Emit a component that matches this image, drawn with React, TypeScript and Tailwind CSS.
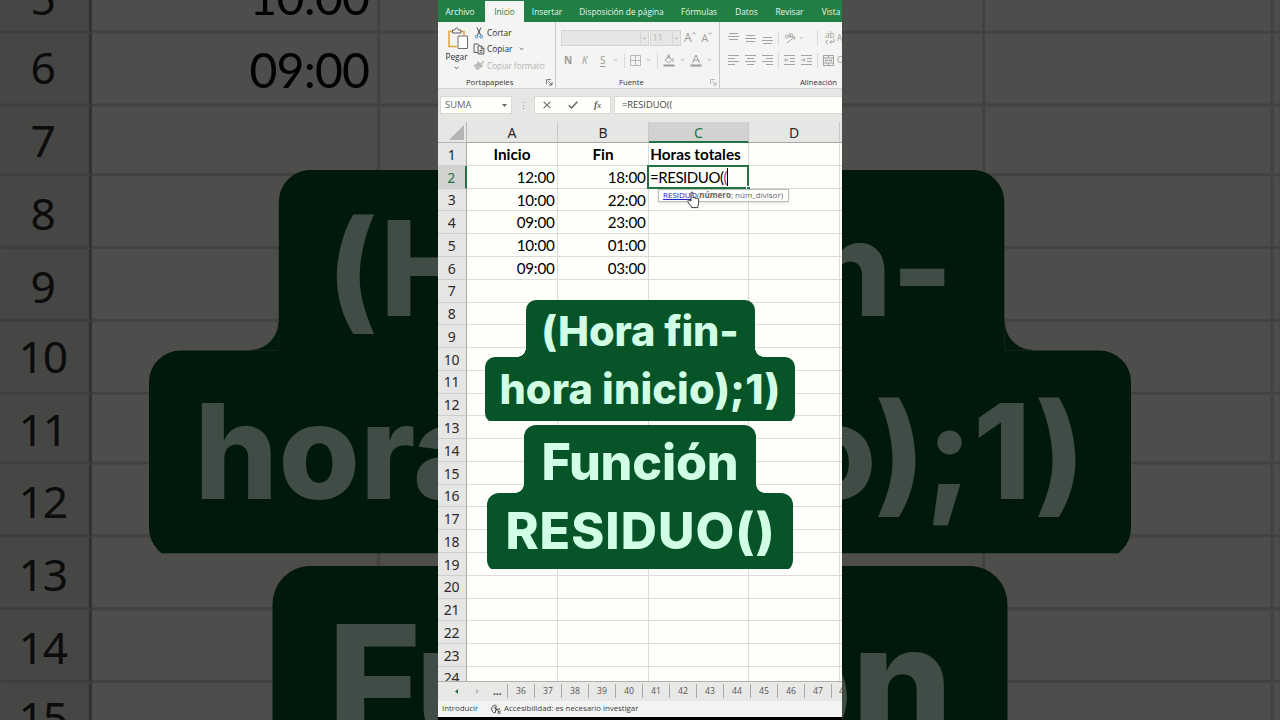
import type { ReactNode } from "react";

const tabs = [
  { name: "Archivo", width: "w-[47px] pr-[3px]" },
  { name: "Inicio", width: "w-[39px]", active: true },
  { name: "Insertar", width: "w-[46px]" },
  { name: "Disposición de página", width: "w-[103px]" },
  { name: "Fórmulas", width: "w-[52px]" },
  { name: "Datos", width: "w-[43px]" },
  { name: "Revisar", width: "w-[43px]" },
  { name: "Vista", width: "w-[40px]" },
];

const columns = [
  { name: "A", width: "w-[91px]" },
  { name: "B", width: "w-[91px]" },
  { name: "C", width: "w-[100px]" },
  { name: "D", width: "w-[91px]" },
  { name: "", width: "w-[10px]" },
];

const cells: Record<number, string[]> = {
  1: ["Inicio", "Fin", "Horas totales"],
  2: ["12:00", "18:00"],
  3: ["10:00", "22:00"],
  4: ["09:00", "23:00"],
  5: ["10:00", "01:00"],
  6: ["09:00", "03:00"],
};

const sheetTabs = [36, 37, 38, 39, 40, 41, 42, 43, 44, 45, 46, 47];

const range = (from: number, to: number) =>
  Array.from({ length: to - from + 1 }, (_, i) => from + i);

function Chevron({ className = "" }: { className?: string }) {
  return (
    <svg className={`w-[5px] h-[4px] shrink-0 ${className}`} viewBox="0 0 5 4" fill="none" stroke="currentColor" strokeWidth="0.9">
      <path d="M0.7 0.8 2.5 2.8 4.3 0.8" />
    </svg>
  );
}

function Triangle({ className = "" }: { className?: string }) {
  return (
    <svg className={`w-[5px] h-[3px] shrink-0 ${className}`} viewBox="0 0 5 3" fill="currentColor">
      <path d="M0 0h5L2.5 3z" />
    </svg>
  );
}

function Launcher({ className = "" }: { className?: string }) {
  return (
    <svg className={`w-[7px] h-[7px] ${className}`} viewBox="0 0 7 7" fill="none" stroke="currentColor" strokeWidth="0.8">
      <path d="M0.6 5V0.6H5M2.4 2.4 6 6M6 3v3H3" />
    </svg>
  );
}

function Lines({ rows, className = "" }: { rows: number[][]; className?: string }) {
  return (
    <svg className={`w-[11px] h-[12px] shrink-0 ${className}`} viewBox="0 0 11 12" stroke="currentColor" strokeWidth="0.9">
      {rows.map(([x1, x2, y]) => (
        <path key={y} d={`M${x1} ${y}H${x2}`} />
      ))}
    </svg>
  );
}

function Separator({ className = "" }: { className?: string }) {
  return <div className={`w-px h-[15px] bg-[#dadad8] shrink-0 ${className}`} />;
}

function Clipboard() {
  return (
    <div className="relative w-[118px] h-[66px] border-r border-[#c8c8c6] shrink-0">
      <div className="flex pt-[3px]">
        <div className="w-[37px] flex flex-col items-center pt-[2px]">
          <svg className="w-[22px] h-[23px] ml-[3px]" viewBox="0 0 22 23" fill="none">
            <path d="M5 4.5H2v15h8M14 4.5h3v4" stroke="#e3a33c" strokeWidth="1.5" />
            <path d="M5.5 6V3h2.3c.2-2.7 3.5-2.7 3.7 0h2.3v3z" fill="#f4f4f2" stroke="#5a5a5a" />
            <path d="M11 9h9.5v12.5H11z" fill="#fdfdfb" stroke="#6e6e6e" />
          </svg>
          <span className="text-[8.3px] leading-[13px] text-[#2e2e2e]">Pegar</span>
          <Chevron className="mt-[3px] text-[#555]" />
        </div>
        <div className="flex flex-col text-[8.3px] leading-[16.3px] text-[#2e2e2e]">
          <div className="flex items-center h-[16.3px]">
            <svg className="w-[8px] h-[12px] mr-[4px]" viewBox="0 0 8 12" fill="none">
              <path d="M2 .5 5.5 8M6 .5 2.5 8" stroke="#4c4c4c" strokeWidth="1" />
              <circle cx="1.7" cy="9.6" r="1.3" stroke="#2f82bd" />
              <circle cx="6.3" cy="9.6" r="1.3" stroke="#2f82bd" />
            </svg>
            Cortar
          </div>
          <div className="flex items-center h-[16.3px]">
            <svg className="w-[12px] h-[12px] -ml-[2px] mr-[2px]" viewBox="0 0 11 12" fill="none" stroke="#4c4c4c" strokeWidth="0.9">
              <path d="M4 9.5H.6V1h4L6 2.5" />
              <path d="M4.5 3H8l2.4 2.4V11H4.5zM7.8 3v2.7h2.6M6 7.5h3M6 9.2h3" />
            </svg>
            Copiar
            <Chevron className="ml-[7px] text-[#666]" />
          </div>
          <div className="flex items-center h-[16.3px] text-[#b4b4b2] tracking-[-0.1px]">
            <svg className="w-[12px] h-[11px] -ml-[2px] mr-[2px]" viewBox="0 0 12 11" fill="none" stroke="currentColor">
              <path d="M11 1 8 4M5.5 2.5 9 6 8 7 4.5 3.5z" strokeWidth="1.3" />
              <path d="M4.5 4 1 5.5 4.5 10 7.5 7z" fill="#c4c4c2" />
            </svg>
            Copiar formato
          </div>
        </div>
      </div>
      <span className="absolute left-[28px] top-[54px] text-[7.7px] leading-[12px] text-[#333]">Portapapeles</span>
      <Launcher className="absolute right-[2px] top-[57px] text-[#555]" />
    </div>
  );
}

function FontGroup() {
  return (
    <div className="relative w-[164px] h-[66px] border-r border-[#c8c8c6] shrink-0 text-[#9b9b99]">
      <div className="flex pt-[8px] pl-[5px] items-center">
        <div className="w-[88px] h-[16px] bg-[#e6e6e5] border border-[#d4d4d2] flex justify-end">
          <div className="w-[8px] border-l border-[#d4d4d2] flex items-center justify-center">
            <Triangle className="text-[#b8b8b6] scale-75" />
          </div>
        </div>
        <div className="w-[31px] h-[16px] ml-px bg-[#e6e6e5] border border-[#d4d4d2] flex items-center text-[8.3px] text-[#b4b4b2]">
          <span className="pl-[2px] grow">11</span>
          <div className="w-[8px] h-full border-l border-[#d4d4d2] flex items-center justify-center">
            <Triangle className="text-[#b8b8b6] scale-75" />
          </div>
        </div>
        <div className="flex items-start ml-[3px] text-[12px] leading-[14px]">
          A
          <svg className="w-[4px] h-[3px] mt-[1px]" viewBox="0 0 4 3" fill="none" stroke="currentColor" strokeWidth="0.8">
            <path d="m.5 2.5 1.5-2 1.5 2" />
          </svg>
        </div>
        <div className="flex items-start ml-[6px] text-[10.5px] leading-[15px]">
          A
          <svg className="w-[4px] h-[3px] mt-[1px]" viewBox="0 0 4 3" fill="none" stroke="currentColor" strokeWidth="0.8">
            <path d="m.5 .5 1.5 2 1.5-2" />
          </svg>
        </div>
      </div>
      <div className="flex items-center h-[14px] mt-[7px] pl-[8px] text-[10px] leading-[14px]">
        <span className="w-[9px] font-bold">N</span>
        <span className="w-[8px] ml-[9px] italic">K</span>
        <span className="w-[7px] ml-[10px] underline underline-offset-2">S</span>
        <Chevron className="ml-[6px] text-[#b4b4b2]" />
        <Separator className="ml-[6px]" />
        <svg className="w-[11px] h-[11px] ml-[5px]" viewBox="0 0 11 11" fill="none" stroke="#b0b0ae" strokeWidth="0.9">
          <path d="M.5 .5h10v10H.5zM5.5 .5v10M.5 5.5h10" />
        </svg>
        <Chevron className="ml-[5px] text-[#b4b4b2]" />
        <Separator className="ml-[6px]" />
        <svg className="w-[12px] h-[13px] ml-[5px]" viewBox="0 0 12 13" fill="none" stroke="currentColor" strokeWidth="0.9">
          <path d="M5 2.5 9 5.5 5.5 9 2 6zM5 5V1.5c0-1 1.5-1 1.5 0v2M9 4c1 1 1.5 2.5 1 4" />
          <path d="M.5 11.5h11" strokeWidth="2" />
        </svg>
        <Chevron className="ml-[5px] text-[#b4b4b2]" />
        <svg className="w-[12px] h-[13px] ml-[5px]" viewBox="0 0 12 13" fill="none" stroke="currentColor">
          <path d="m2.5 9 3.5-8 3.5 8M3.8 6.2h4.4" />
          <path d="M.5 11.5h11" strokeWidth="2" />
        </svg>
        <Chevron className="ml-[5px] text-[#b4b4b2]" />
      </div>
      <span className="absolute left-[63px] top-[54px] text-[7.7px] leading-[12px] text-[#333]">Fuente</span>
      <Launcher className="absolute right-[2px] top-[57px] text-[#a8a8a6]" />
    </div>
  );
}

function Alignment() {
  return (
    <div className="relative w-[150px] h-[66px] shrink-0 text-[#9b9b99]">
      <div className="flex items-center pt-[8px] pl-[8px] h-[24px]">
        <Lines rows={[[1, 10, 1.5], [0, 11, 4.5], [1, 10, 7.5]]} />
        <Lines rows={[[1, 10, 3.5], [0, 11, 6.5], [1, 10, 9.5]]} className="ml-[6px]" />
        <Lines rows={[[1, 10, 5.5], [0, 11, 8.5], [1, 10, 11.5]]} className="ml-[6px]" />
        <Separator className="ml-[5px]" />
        <svg className="w-[12px] h-[12px] ml-[5px] shrink-0" viewBox="0 0 13 13" fill="none" stroke="currentColor" strokeWidth="0.9">
          <circle cx="3.2" cy="5" r="1.7" />
          <path d="m4.8 3.5 1.5 2.5M5.5 1l3 5" />
          <circle cx="8" cy="3.7" r="1.6" />
          <path d="m3 12 8.5-6.5M8.5 5.5h3v3" />
        </svg>
        <Chevron className="ml-[3px] text-[#b4b4b2]" />
        <Separator className="ml-[13px] h-[16px]" />
        <div className="flex flex-col w-[10px] shrink-0 ml-[7px] text-[8.3px] leading-[6px] tracking-[-0.2px]">
          ab
          <svg className="w-[10px] h-[6px] mt-px" viewBox="0 0 10 6" fill="none" stroke="currentColor" strokeWidth="0.9">
            <path d="M3 1.5a1.6 1.6 0 1 0 0 3M9 0v3H5M6.5 1.5 5 3l1.5 1.5" />
          </svg>
        </div>
        <span className="ml-[2px] text-[8.3px]">Ajustar</span>
      </div>
      <div className="flex items-center h-[14px] mt-[7px] pl-[8px]">
        <Lines rows={[[0, 11, 1.5], [0, 7, 4.5], [0, 11, 7.5], [0, 7, 10.5]]} />
        <Lines rows={[[0, 11, 1.5], [2, 9, 4.5], [0, 11, 7.5], [2, 9, 10.5]]} className="ml-[6px]" />
        <Lines rows={[[0, 11, 1.5], [4, 11, 4.5], [0, 11, 7.5], [4, 11, 10.5]]} className="ml-[6px]" />
        <Separator className="ml-[5px]" />
        <svg className="w-[11px] h-[12px] ml-[5px] shrink-0" viewBox="0 0 11 12" fill="none" stroke="currentColor" strokeWidth="0.9">
          <path d="M0 1.5h11M6 4.5h5M6 7.5h5M0 10.5h11M4.5 6H.8M2.3 4.3.6 6l1.7 1.7" />
        </svg>
        <svg className="w-[11px] h-[12px] ml-[6px] shrink-0" viewBox="0 0 11 12" fill="none" stroke="currentColor" strokeWidth="0.9">
          <path d="M0 1.5h11M6 4.5h5M6 7.5h5M0 10.5h11M0 6h4M2.5 4.3 4.2 6 2.5 7.7" />
        </svg>
        <Separator className="ml-[5px]" />
        <svg className="w-[11px] h-[11px] ml-[5px] shrink-0" viewBox="0 0 11 11" fill="none" stroke="currentColor" strokeWidth="0.9">
          <path d="M.5 .5h10v10H.5zM.5 3h10M.5 8h10M5.5 .5V3M5.5 8v2.5M2 5.5h7M3.3 4.3 2 5.5l1.3 1.2M7.7 4.3 9 5.5 7.7 6.7" />
        </svg>
        <span className="ml-[3px] text-[8.3px] whitespace-nowrap">Combinar</span>
      </div>
      <span className="absolute left-[80px] top-[54px] text-[7.7px] leading-[12px] text-[#333]">Alineación</span>
    </div>
  );
}

function FormulaBar() {
  return (
    <div className="h-[26px] flex items-start pl-[2px] text-[#666] shrink-0 font-normal">
      <div className="w-[72px] h-[18px] bg-[#fefffa] border border-[#d8d8d6] flex items-center justify-between pl-[4px] pr-[4px] text-[9.4px]">
        SUMA
        <Triangle />
      </div>
      <div className="w-[22px] h-[18px] flex flex-col items-center justify-center gap-[2px]">
        <i className="size-px bg-[#999]" />
        <i className="size-px bg-[#999]" />
        <i className="size-px bg-[#999]" />
      </div>
      <div className="w-[77px] h-[18px] bg-[#fefffa] border border-[#d8d8d6] flex items-center pl-[8px]">
        <svg className="w-[8px] h-[8px]" viewBox="0 0 8 8" fill="none" stroke="currentColor" strokeWidth="1.1">
          <path d="M.6.8 7.4 7.2M7.4.8.6 7.2" />
        </svg>
        <svg className="w-[10px] h-[8px] ml-[17px]" viewBox="0 0 10 8" fill="none" stroke="currentColor" strokeWidth="1.5">
          <path d="M.8 4.3 3.5 7 9.3.8" />
        </svg>
        <span className="ml-[16px] font-['Liberation_Serif',serif] italic font-bold text-[10px] leading-none">
          f<span className="text-[8px]">x</span>
        </span>
      </div>
      <div className="grow h-[18px] ml-[3px] bg-[#fefffa] border-y border-l border-[#d8d8d6] flex items-center pl-[7px] text-[9.3px] text-[#444]">
        =RESIDUO((
      </div>
    </div>
  );
}

function ActiveCell() {
  return (
    <div className="absolute -left-[2px] -top-px w-[102px] h-[24px] border-2 border-[#217346] bg-[#fefffa] z-10 flex items-center pl-[1px] text-left text-[15px] tracking-[-0.45px]">
      =RESIDUO(<span className="text-[#a8327a]">(</span>
      <span className="w-px h-[18px] bg-black" />
      <i className="absolute -right-[3px] -bottom-[3px] size-[4px] bg-[#217346] border-l border-t border-white" />
      <div className="absolute left-[9px] top-[22px] w-[131px] h-[13px] bg-[#fdfdfb] border border-[#bcbcba] shadow-sm pl-[4px] font-['Open_Sans',sans-serif] text-[8px] leading-[10px] tracking-[0px] text-[#666] whitespace-nowrap">
        <span className="text-[#2a20c8] underline">RESIDUO</span>(<b>número</b>; núm_divisor)
      </div>
      <svg className="absolute left-[38px] top-[24px] w-[13px] h-[18px]" viewBox="0 0 13 18" fill="#fff" stroke="#222" strokeWidth="0.9" strokeLinejoin="round">
        <path d="M4 10V2c0-1.3 2-1.3 2 0v5c.3-.8 1.9-.7 2 .3.5-.6 1.8-.4 1.9.5.6-.5 1.7-.2 1.7.8v4c0 1.3-.8 2.2-.8 4H4.7c0-1.5-2.5-3.2-3.9-6-.4-1.2.9-1.7 1.7-.9z" />
      </svg>
    </div>
  );
}

function Row({ n }: { n: number }) {
  const values = cells[n] ?? [];
  const selected = n === 2;
  return (
    <div className="flex h-[22.766px] shrink-0 font-normal">
      <div
        className={`w-[29px] shrink-0 border-b border-b-[#cdcdcb] flex items-center justify-center pt-[1.5px] pr-[1px] font-['Noto_Sans',sans-serif] text-[14px] leading-none tracking-[-0.3px] ${
          selected
            ? "bg-[#d2d2d0] text-[#217346] border-r-2 border-r-[#217346]"
            : "bg-[#e6e6e4] text-[#2a2a2a] border-r border-r-[#a6a6a4]"
        }`}
      >
        {n}
      </div>
      {columns.map((col, i) => (
        <div
          key={i}
          className={`relative shrink-0 border-r border-b border-[#dbdcd7] font-[Lato,sans-serif] leading-[22px] text-black whitespace-nowrap ${col.width} ${
            n === 1
              ? "font-bold text-center text-[15.3px]"
              : "text-right text-[15.2px] pr-[2.5px] tracking-[-0.25px]"
          } ${n === 1 && col.name === "C" ? "pr-[6px]" : ""}`}
        >
          {values[i]}
          {selected && col.name === "C" && <ActiveCell />}
        </div>
      ))}
    </div>
  );
}

function ColumnHeaders() {
  return (
    <div className="flex h-[21.2px] shrink-0 font-['Noto_Sans',sans-serif] font-normal text-[14px] leading-[22px] text-center text-[#2a2a2a]">
      <div className="w-[29px] shrink-0 border-r border-b border-[#b6b6b4] flex justify-end items-end p-[2px]">
        <svg className="w-[15px] h-[15px]" viewBox="0 0 15 15" fill="#b4b4b2">
          <path d="M15 0v15H0z" />
        </svg>
      </div>
      {columns.map((col) => (
        <div
          key={col.name}
          className={`shrink-0 border-r border-r-[#c9c9c7] ${col.width} ${
            col.name === "C"
              ? "bg-[#d2d2d0] text-[#217346] border-b-2 border-b-[#217346]"
              : "border-b border-b-[#a6a6a4]"
          }`}
        >
          {col.name}
        </div>
      ))}
    </div>
  );
}

function SheetTabs() {
  return (
    <div className="h-[20px] flex items-center border-t border-[#b0b0ae] bg-[#e8e8e6] shrink-0 text-[8.6px] text-[#555]">
      <div className="w-[69px] flex items-center shrink-0">
        <svg className="w-[3px] h-[5px] ml-[17px]" viewBox="0 0 3 5" fill="#217346">
          <path d="M3 0v5L0 2.5z" />
        </svg>
        <svg className="w-[3px] h-[5px] ml-[18px]" viewBox="0 0 3 5" fill="#bbb">
          <path d="M0 0v5l3-2.5z" />
        </svg>
        <span className="ml-[14px] -mt-[2px] font-bold text-[10px] leading-none text-[#333]">...</span>
      </div>
      {sheetTabs.map((n) => (
        <div key={n} className="w-[27px] h-[14px] -mt-px leading-[14px] shrink-0 text-center border-l border-[#a8a8a6]">
          {n}
        </div>
      ))}
      <div className="h-[14px] -mt-px leading-[14px] border-l border-[#a8a8a6] pl-[7px]">48</div>
    </div>
  );
}

function StatusBar() {
  return (
    <div className="h-[16px] flex items-center bg-[#f3f3f1] shrink-0 pl-[4px] text-[7.85px] text-[#3c3c3c] whitespace-nowrap">
      <span className="w-[49px]">Introducir</span>
      <svg className="w-[11px] h-[11px] mr-[2px]" viewBox="0 0 11 11" fill="none" stroke="#444" strokeWidth="1">
        <path d="M4.5 1C-.5 2-.5 8 4 9M3.5 3 5 5.5 9 5M5 1.5v4L4 9M6 5.5 9.5 10M10 6.5 6.5 10" />
      </svg>
      Accesibilidad: es necesario investigar
    </div>
  );
}

// Inner corner where the narrow line of a caption meets the wide one
function InnerCorners() {
  return (
    <>
      <i className="absolute right-full bottom-[3px] size-[9px] bg-[radial-gradient(circle_at_0_0,transparent_8.6px,#065427_9px)]" />
      <i className="absolute left-full bottom-[3px] size-[9px] bg-[radial-gradient(circle_at_100%_0,transparent_8.6px,#065427_9px)]" />
    </>
  );
}

function Captions() {
  return (
    <div className="absolute inset-x-0 top-[300px] flex flex-col items-center font-[Inter,sans-serif] font-extrabold text-[#d1ffe6] whitespace-nowrap text-center">
      <div className="h-[120.6px] overflow-hidden flex flex-col items-center text-[41.5px]">
        <div className="relative w-[229px] h-[60.4px] -mb-[3px] shrink-0 rounded-t-[10px] bg-[#065427] leading-[62px] tracking-[-0.15px]">
          <InnerCorners />
          (Hora fin-
        </div>
        <div className="relative w-[310.5px] h-[66px] shrink-0 rounded-[10px] bg-[#065427] leading-[64px] tracking-[0.1px]">
          hora inicio);1)
        </div>
      </div>
      <div className="h-[144.2px] mt-[4.3px] overflow-hidden flex flex-col items-center text-[50.2px]">
        <div className="relative w-[232.5px] h-[71.5px] -mb-[3px] shrink-0 rounded-t-[12px] bg-[#065427] leading-[74px] tracking-[-0.2px]">
          <InnerCorners />
          Función
        </div>
        <div className="relative w-[306px] h-[79px] shrink-0 rounded-[12px] bg-[#065427] pl-[1px] leading-[75px] tracking-[1px]">
          RESIDUO()
        </div>
      </div>
    </div>
  );
}

function Backdrop({ children }: { children: ReactNode }) {
  return (
    <div className="absolute inset-0 overflow-hidden flex justify-center opacity-30">
      <div className="relative w-[404px] h-[720px] shrink-0 overflow-hidden scale-[3.168] bg-[#fefffa]">{children}</div>
    </div>
  );
}

export default function App() {
  return (
    <div className="relative w-[1280px] h-[720px] overflow-hidden bg-black flex justify-center">
      <Backdrop>
        <div className="flex flex-col pt-[234px]">
          {range(5, 15).map((n) => (
            <Row key={n} n={n} />
          ))}
        </div>
        <Captions />
      </Backdrop>

      <main className="relative w-[404px] h-[720px] overflow-hidden bg-black flex flex-col font-['Open_Sans',sans-serif] font-medium">
        <nav className="h-[22px] flex bg-[#217f45] shrink-0 text-[8.3px] leading-[24px] text-center text-[#eaf5ec] whitespace-nowrap">
          {tabs.map((tab) => (
            <div
              key={tab.name}
              className={`shrink-0 ${tab.width} ${tab.active ? "mt-[1px] bg-[#f4f4f2] leading-[22px] text-[#217f45]" : ""}`}
            >
              {tab.name}
            </div>
          ))}
        </nav>
        <div className="h-[67px] flex bg-[#f4f4f2] border-b border-[#d2d2d0] shrink-0">
          <Clipboard />
          <FontGroup />
          <Alignment />
        </div>
        <div className="h-[592px] flex flex-col bg-[#e6e6e4] pt-[7px] shrink-0 overflow-hidden">
          <FormulaBar />
          <ColumnHeaders />
          <div className="grow overflow-hidden flex flex-col bg-[#fefffa]">
            {range(1, 24).map((n) => (
              <Row key={n} n={n} />
            ))}
          </div>
        </div>
        <SheetTabs />
        <StatusBar />
        <Captions />
      </main>
    </div>
  );
}
